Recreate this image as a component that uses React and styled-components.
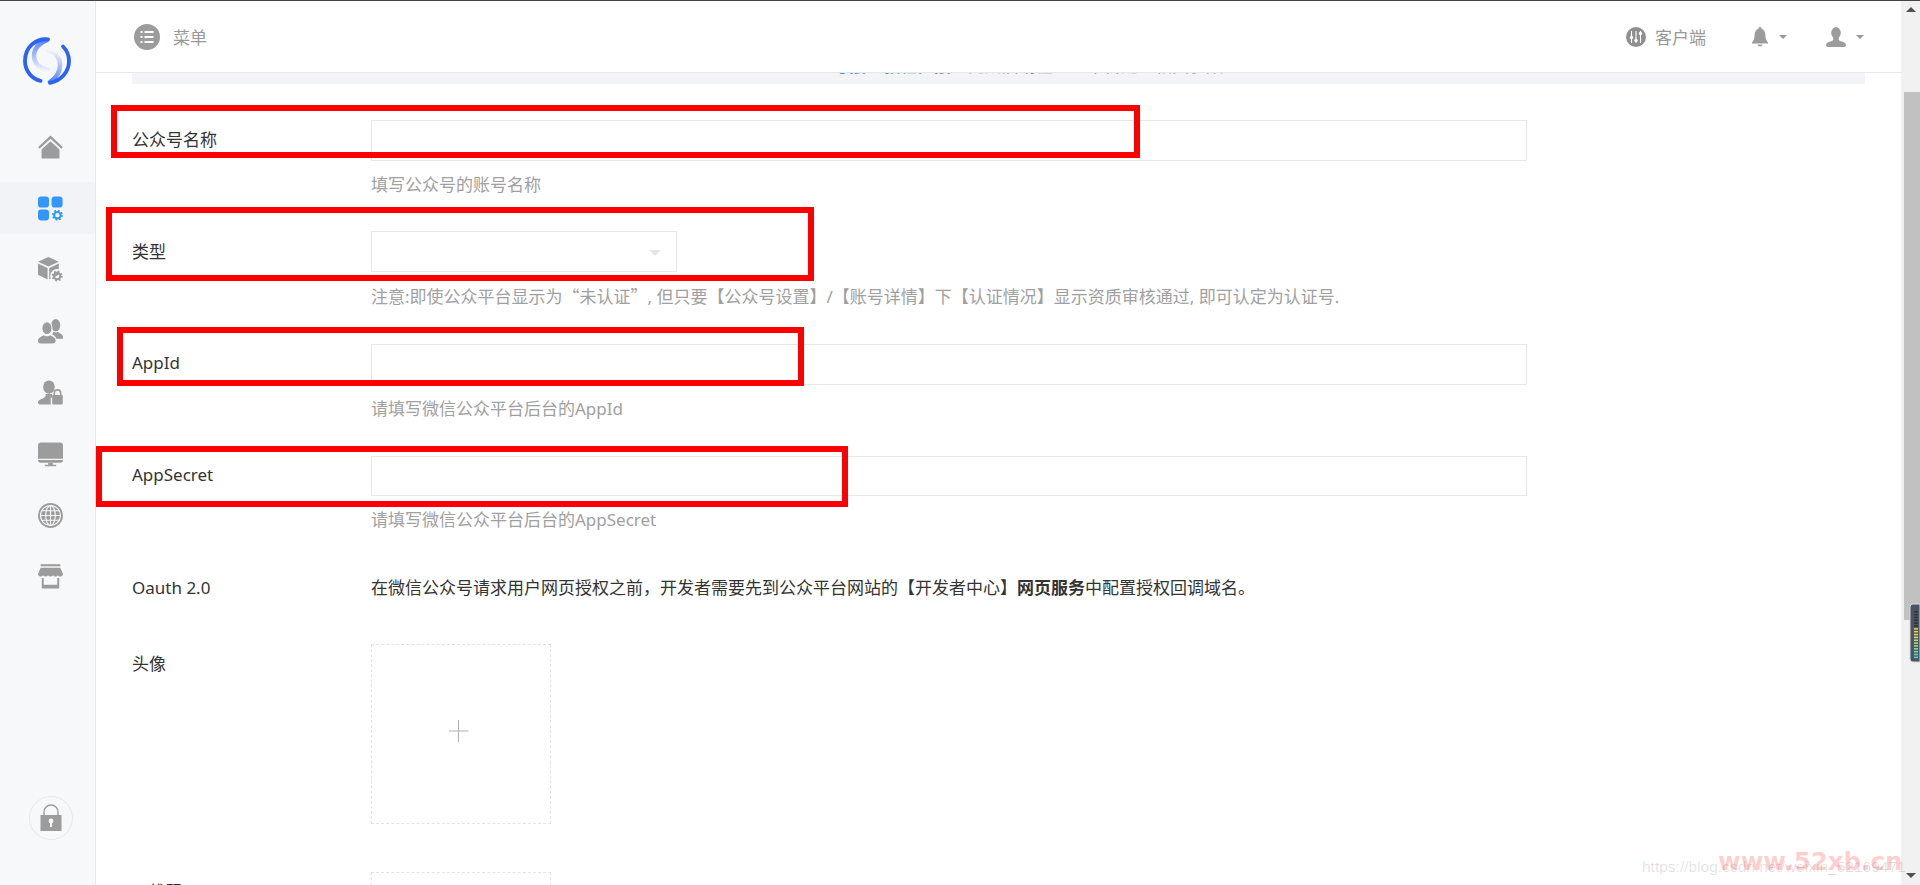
import React from "react";
import styled, { createGlobalStyle } from "styled-components";

const Global = createGlobalStyle`
  html, body { margin: 0; height: 100%; overflow: hidden; background: #fff; }
  #root { height: 100%; }
  * { box-sizing: border-box; }
  body { font-family: "Noto Sans", "Noto Sans CJK SC", sans-serif; font-size: 17px; color: #333; }
`;

const Shell = styled.div`
  position: relative;
  height: 885px;
  display: flex;
  overflow: hidden;
  border-top: 1px solid #454545;
`;
const Sidebar = styled.aside`
  width: 96px;
  flex: none;
  display: flex;
  flex-direction: column;
  background: #f7f8fa;
  border-right: 1px solid #e7e8ec;
`;
const LogoWrap = styled.div`
  height: 120px;
  padding: 36px 0 0 23px;
`;
const Nav = styled.nav`
  display: flex;
  flex-direction: column;
  gap: 9.43px;
  flex: 1;
`;
const NavItem = styled.div`
  height: 52px;
  flex: none;
  display: flex;
  align-items: center;
  justify-content: center;
  padding-left: 5px;
  color: ${(p) => (p.$active ? "#3296fa" : "#9c9c9c")};
  background: ${(p) => (p.$active ? "#f1f3f7" : "transparent")};
`;
const LockCircle = styled.div`
  width: 44px;
  height: 44px;
  flex: none;
  margin: 0 0 45px 29px;
  border: 1px solid #e7e8ec;
  border-radius: 50%;
  display: flex;
  align-items: center;
  justify-content: center;
  color: #9c9c9c;
`;
const Main = styled.div`
  flex: 1;
  min-width: 0;
  display: flex;
  flex-direction: column;
`;
const TopBar = styled.header`
  height: 72px;
  flex: none;
  display: flex;
  align-items: center;
  padding: 0 37px 0 38px;
  border-bottom: 1px solid #e7e8ec;
  color: #999;
`;
const MenuLabel = styled.span`
  margin-left: 13px;
  flex: 1;
`;
const ClientLabel = styled.span`
  margin-left: 9px;
  margin-right: 46px;
`;
const Caret = styled.span`
  width: 0;
  height: 0;
  margin-left: ${(p) => p.$gap || 11}px;
  margin-right: ${(p) => p.$after || 0}px;
  border-left: 4px solid transparent;
  border-right: 4px solid transparent;
  border-top: 4.5px solid #999;
`;
const Viewport = styled.div`
  flex: 1;
  overflow: hidden;
  padding: 0 36px;
`;
const Notice = styled.div`
  height: 11px;
  background: #f3f4f8;
  overflow: hidden;
  display: flex;
  align-items: flex-end;
  justify-content: center;
  padding: 0 0 7px 24px;
  color: #888;
  white-space: nowrap;
  margin-bottom: 35.8px;
`;
const NoticeLink = styled.span`
  color: #3296fa;
`;
const Row = styled.div`
  position: relative;
  display: grid;
  grid-template-columns: 239px 1156px;
  margin-bottom: ${(p) => p.$mb ?? 33.6}px;
`;
const Label = styled.div`
  padding-top: ${(p) => p.$pt ?? 7.4}px;
  line-height: 25.2px;
  color: #333;
`;
const TextInput = styled.div`
  height: 40.8px;
  border: 1px solid #e7e7eb;
  background: #fff;
`;
const SelectBox = styled.div`
  width: 306px;
  height: 40.8px;
  border: 1px solid #e7e7eb;
  display: flex;
  align-items: center;
  justify-content: flex-end;
  padding-right: 15px;
  &::after {
    content: "";
    border-left: 6.5px solid transparent;
    border-right: 6.5px solid transparent;
    border-top: 6.5px solid #e6e6e6;
    margin-top: 2px;
  }
`;
const Help = styled.div`
  margin-top: 11px;
  margin-bottom: 1px;
  line-height: 25.2px;
  color: #a0a0a0;
  white-space: nowrap;
`;
const Quoted = styled.span`
  font-family: "Noto Sans CJK SC", sans-serif;
`;
const Static = styled.div`
  padding-top: 7.4px;
  height: 43px;
  line-height: 25.2px;
  color: #333;
  white-space: nowrap;
`;
const Upload = styled.div`
  width: 180px;
  height: 180px;
  border: 1px dashed #e3e3e3;
  display: flex;
  align-items: center;
  justify-content: center;
  padding: 0 4px 6px 0;
  color: #b0b0b0;
`;
const Annotation = styled.div`
  position: absolute;
  left: ${(p) => p.$l}px;
  top: ${(p) => p.$t}px;
  width: ${(p) => p.$w}px;
  height: ${(p) => p.$h}px;
  border: 6px solid #ff0000;
  pointer-events: none;
`;
const Rail = styled.div`
  width: 19px;
  flex: none;
  background: #f1f1f1;
  display: flex;
  flex-direction: column;
  align-items: flex-end;
`;
const RailArrow = styled.div`
  width: 19px;
  height: ${(p) => p.$h}px;
  flex: none;
  display: flex;
  justify-content: center;
  padding-top: ${(p) => p.$pt}px;
  &::after {
    content: "";
    height: 0;
    border-left: 5px solid transparent;
    border-right: 5px solid transparent;
    ${(p) => (p.$down ? "border-top: 5px solid #505050;" : "border-bottom: 5px solid #505050;")}
  }
`;
const RailThumb = styled.div`
  width: 16px;
  height: 528px;
  margin: 73px 0 0;
  background: #c1c1c1;
`;
const RailGap = styled.div`
  flex: 1;
`;
const Meter = styled.svg`
  position: absolute;
  right: 0;
  top: 602px;
`;
const Stamp = styled.div`
  position: absolute;
  left: 1718px;
  top: 843px;
  font-family: "DejaVu Sans", sans-serif;
  font-weight: 700;
  font-size: 24.5px;
  line-height: 36px;
  color: rgba(255, 0, 0, 0.2);
  white-space: nowrap;
`;
const BlogMark = styled.div`
  position: absolute;
  left: 1642px;
  top: 856px;
  font-family: "Liberation Sans", sans-serif;
  font-size: 15.5px;
  line-height: 20px;
  color: rgba(0, 0, 0, 0.13);
  white-space: nowrap;
`;

const Logo = () => (
  <svg width="48" height="48" viewBox="0 0 48 48" fill="none">
    <defs>
      <linearGradient id="lgB" x1="32" y1="14" x2="26" y2="44" gradientUnits="userSpaceOnUse">
        <stop offset="0" stopColor="#2a63f5" stopOpacity="0.02" />
        <stop offset="1" stopColor="#2a63f5" stopOpacity="0.8" />
      </linearGradient>
      <linearGradient id="lgC" x1="20" y1="34" x2="22" y2="3" gradientUnits="userSpaceOnUse">
        <stop offset="0" stopColor="#2a63f5" stopOpacity="0.02" />
        <stop offset="1" stopColor="#2a63f5" stopOpacity="0.8" />
      </linearGradient>
    </defs>
    <path d="M25 2.400C13 1 2 10 2 24c0 10 7 18 15.500 19.800" stroke="#2a63f5" strokeWidth="3.800" strokeLinecap="round" />
    <path d="M27 45.800C38 44 46 35 46 24c0-6-2.500-11-6-14.500" stroke="#2a63f5" strokeWidth="3.800" strokeLinecap="round" />
    <path d="M24 3c-8 2.500-13 9-13 15.500 0 8 6 13.500 14 14.500" stroke="url(#lgC)" strokeWidth="4.500" strokeLinecap="round" />
    <path d="M27 45c6-4 10-10 10-17 0-7-4-12-11-14.500" stroke="url(#lgB)" strokeWidth="4.500" strokeLinecap="round" />
  </svg>
);

const Gear = ({ x, y, c = "currentColor" }) => (
  <g fill="none" stroke={c}>
    <circle cx={x} cy={y} r="5.400" stroke="#f7f8fa" strokeWidth="2.600" />
    <circle cx={x} cy={y} r="3.100" strokeWidth="2" />
    <circle cx={x} cy={y} r="4.500" strokeWidth="1.600" strokeDasharray="1.700 1.830" />
  </g>
);

const Svg = ({ children, size = 25 }) => (
  <svg width={size} height={size} viewBox="0 0 24 24" fill="currentColor">{children}</svg>
);

const HomeIcon = () => (
  <Svg>
    <path d="M12 .5.2 11.600l1.400 1.600L12 3.600l10.400 9.600 1.400-1.600z" />
    <path d="M12 6 3.400 13.900V22.600h17.200v-8.700z" />
  </Svg>
);
const AppsIcon = () => (
  <Svg>
    <rect x="0" y="0.500" width="10.600" height="10.600" rx="3" />
    <rect x="13" y="0.500" width="10.600" height="10.600" rx="3" />
    <rect x="0" y="12.900" width="10.600" height="10.600" rx="3" />
    <Gear x={18.6} y={18.4} />
  </Svg>
);
const CubeIcon = () => (
  <Svg>
    <path d="M10 0 20 4.600 10 9.200 0 4.600z" />
    <path d="M0 6.200 9.200 10.500V21.500L0 17z" />
    <path d="M10.800 10.500 20 6.200V17l-9.200 4.500z" />
    <Gear x={18.4} y={18.2} />
  </Svg>
);
const UsersIcon = () => (
  <Svg>
    <ellipse cx="17" cy="6" rx="4.300" ry="6" />
    <path d="M15 12c1 1.400 3.200 1.400 4.200 0 .4 1.600 4.800 2.400 4.800 5v2h-6.400c-.6-2.200-2.400-3.400-4-4.400z" />
    <ellipse cx="8.600" cy="8.800" rx="4.900" ry="6.200" stroke="#f7f8fa" strokeWidth="1" />
    <path d="M5.600 15.500c1.400 1.400 4.600 1.400 6 0 2.400 1.200 5.400 2.600 5.400 5.200 0 2-1.600 2.800-3 2.800H2.600c-1.400 0-2.600-.8-2.600-2.600 0-2.800 2.800-4 5.600-5.400z" />
  </Svg>
);
const UserLockIcon = () => (
  <Svg>
    <ellipse cx="10.500" cy="6.800" rx="5.600" ry="6.400" />
    <path d="M7.500 13.500h6v3.400h-1.300v6.600H2c-1.500 0-2-.8-2-1.800 0-2.200 2.600-3.200 5-4.200 1.400-.6 2.500-1.600 2.500-4z" />
    <rect x="13.600" y="14.400" width="10.200" height="9" rx="1" />
    <path d="M15.600 14.600v-2a3.100 3.100 0 0 1 6.200 0v2" fill="none" stroke="currentColor" strokeWidth="1.500" />
  </Svg>
);
const MonitorIcon = () => (
  <Svg>
    <path d="M3 .5h18a3 3 0 0 1 3 3v12.600H0V3.500a3 3 0 0 1 3-3z" />
    <path d="M0 17.300h24V18a2.600 2.600 0 0 1-2.600 2H2.600A2.600 2.600 0 0 1 0 18z" />
    <path d="M9.800 20h4.400v1.800h3.200v1.500H6.600v-1.500h3.200z" />
  </Svg>
);
const GlobeIcon = () => (
  <Svg>
    <circle cx="12" cy="12" r="12" />
    <circle cx="12" cy="12" r="9.600" fill="none" stroke="#f7f8fa" strokeWidth="1.100" />
    <ellipse cx="12" cy="12" rx="4.600" ry="9.600" fill="none" stroke="#f7f8fa" strokeWidth="1.100" />
    <path d="M12 2.400v19.200M2.400 12h19.200M3.600 7.400h16.800M3.600 16.600h16.800" stroke="#f7f8fa" strokeWidth="1.100" />
  </Svg>
);
const StoreIcon = () => (
  <Svg>
    <rect x="2.600" y="0.200" width="18.800" height="2" />
    <path d="M2.600 3.600h18.800L24 9.600c0 1.400-1.100 2.400-2.400 2.400-1.200 0-2-.6-2.400-1.300-.5.8-1.400 1.300-2.400 1.300s-1.900-.5-2.400-1.300c-.5.8-1.400 1.300-2.400 1.300s-1.900-.5-2.400-1.300c-.5.8-1.400 1.300-2.400 1.300s-1.900-.5-2.400-1.300c-.4.700-1.200 1.300-2.400 1.300C1.100 12 0 11 0 9.600z" />
    <path d="M3.600 13.400v9.200c0 .6.400 1 1 1h14.800c.6 0 1-.4 1-1v-9.200h-1.900v6.400H5.500v-6.400z" />
  </Svg>
);
const LockIcon = () => (
  <svg width="22" height="28" viewBox="0 0 22 28" fill="currentColor">
    <path d="M4 11V8a7 7 0 0 1 14 0v3" fill="none" stroke="currentColor" strokeWidth="1.400" />
    <rect x="0.500" y="11" width="21" height="16" />
    <circle cx="11" cy="17" r="2.400" fill="#f7f8fa" />
    <rect x="10" y="17" width="2" height="6" fill="#f7f8fa" />
  </svg>
);
const MenuIcon = () => (
  <svg width="26" height="26" viewBox="0 0 26 26">
    <circle cx="13" cy="13" r="13" fill="#9c9c9c" />
    <path d="M6.500 8h2M10.500 8h9M6.500 13h2M10.500 13h9M6.500 18h2M10.500 18h9" stroke="#fff" strokeWidth="1.900" />
  </svg>
);
const SlidersIcon = () => (
  <svg width="20" height="20" viewBox="0 0 20 20">
    <circle cx="10" cy="10" r="10" fill="#8f8f8f" />
    <path d="M5.500 4v12M10 4v12M14.500 4v12" stroke="#fff" strokeWidth="1.100" />
    <circle cx="5.500" cy="10.500" r="1.700" fill="#fff" />
    <circle cx="10" cy="13.500" r="1.700" fill="#fff" />
    <circle cx="14.500" cy="6.500" r="1.700" fill="#fff" />
  </svg>
);
const BellIcon = () => (
  <svg width="16" height="20" viewBox="0 0 16 20" fill="#9c9c9c">
    <path d="M8 0a1.400 1.400 0 0 1 1.400 1.600C12 2.400 13.400 5 13.400 8c0 4 1 5.600 2.600 7.400V16.400H0v-1C1.600 13.600 2.600 12 2.600 8 2.600 5 4 2.400 6.600 1.600A1.400 1.400 0 0 1 8 0z" />
    <path d="M5.600 17.600h4.800A2.500 2.500 0 0 1 8 19.600a2.500 2.500 0 0 1-2.400-2z" />
  </svg>
);
const PersonIcon = () => (
  <svg width="20" height="20" viewBox="0 0 20 20" fill="#9c9c9c">
    <ellipse cx="10" cy="5.800" rx="4.800" ry="5.800" />
    <path d="M7.200 10.600h5.600v1.800c0 1 1.400 1.600 3 2.200 2 .7 4.200 1.500 4.200 3.400 0 1.300-1 2-2 2H2c-1 0-2-.7-2-2 0-1.900 2.200-2.700 4.200-3.400 1.600-.6 3-1.200 3-2.200z" />
  </svg>
);
const PlusIcon = () => (
  <svg width="20" height="22" viewBox="0 0 20 22" stroke="currentColor" strokeWidth="1">
    <path d="M0 11h19.500M9.500 0v22" />
  </svg>
);

const meterBars = [
  "#30343d", "#30343d", "#30343d", "#30343d", "#30343d", "#30343d",
  "#f5d33a", "#f3d83e", "#ece048", "#dde558", "#c8e866", "#b2e874", "#98e884", "#80e896", "#66e8a8", "#50e8b8", "#3ee8c6",
];
const LevelMeter = () => (
  <Meter width="11" height="60" viewBox="0 0 11 60">
    <path d="M11 1H4a3 3 0 0 0-3 3v52a3 3 0 0 0 3 3h7z" fill="#4c5463" stroke="#d5d7dc" strokeWidth="1" />
    {meterBars.map((c, i) => (
      <rect key={i} x="5" y={8 + i * 2.85} width="4" height="1.500" fill={c} />
    ))}
  </Meter>
);

const fields = [
  {
    label: "公众号名称",
    control: <TextInput />,
    help: "填写公众号的账号名称",
    box: { l: -21, t: -15, w: 1029, h: 53 },
  },
  {
    label: "类型",
    control: <SelectBox />,
    help: (
      <>
        注意:即使公众平台显示为<Quoted>“未认证”</Quoted>, 但只要【公众号设置】/【账号详情】下【认证情况】显示资质审核通过, 即可认定为认证号.
      </>
    ),
    box: { l: -26, t: -24, w: 708, h: 74 },
  },
  {
    label: "AppId",
    pt: 6.4,
    control: <TextInput />,
    help: "请填写微信公众平台后台的AppId",
    box: { l: -15, t: -17, w: 687, h: 59 },
  },
  {
    label: "AppSecret",
    pt: 6.4,
    control: <TextInput />,
    help: "请填写微信公众平台后台的AppSecret",
    box: { l: -36, t: -10, w: 752, h: 61 },
  },
];

const navIcons = [HomeIcon, AppsIcon, CubeIcon, UsersIcon, UserLockIcon, MonitorIcon, GlobeIcon, StoreIcon];

export default function App() {
  return (
    <>
      <Global />
      <Shell>
        <Sidebar>
          <LogoWrap><Logo /></LogoWrap>
          <Nav>
            {navIcons.map((Icon, i) => (
              <NavItem key={i} $active={i === 1}><Icon /></NavItem>
            ))}
          </Nav>
          <LockCircle><LockIcon /></LockCircle>
        </Sidebar>
        <Main>
          <TopBar>
            <MenuIcon />
            <MenuLabel>菜单</MenuLabel>
            <SlidersIcon />
            <ClientLabel>客户端</ClientLabel>
            <BellIcon />
            <Caret $after={39} />
            <PersonIcon />
            <Caret $gap={10} />
          </TopBar>
          <Viewport>
            <Notice>
              <NoticeLink>公众号接入教程</NoticeLink>，接入完成后请在公众平台配置相关参数
            </Notice>
            {fields.map((f) => (
              <Row key={f.label}>
                <Label $pt={f.pt}>{f.label}</Label>
                <div>
                  {f.control}
                  <Help>{f.help}</Help>
                </div>
                <Annotation $l={f.box.l} $t={f.box.t} $w={f.box.w} $h={f.box.h} />
              </Row>
            ))}
            <Row>
              <Label>Oauth 2.0</Label>
              <Static>
                在微信公众号请求用户网页授权之前，开发者需要先到公众平台网站的【开发者中心】<b>网页服务</b>中配置授权回调域名。
              </Static>
            </Row>
            <Row $mb={48}>
              <Label $pt={7}>头像</Label>
              <Upload><PlusIcon /></Upload>
            </Row>
            <Row>
              <Label $pt={7}>二维码</Label>
              <Upload><PlusIcon /></Upload>
            </Row>
          </Viewport>
        </Main>
        <Rail>
          <RailArrow $h={18} $pt={6} />
          <RailThumb />
          <RailGap />
          <RailArrow $h={18} $pt={6} $down />
        </Rail>
        <LevelMeter />
        <BlogMark>https://blog.csdn.net/weixin_52169471</BlogMark>
        <Stamp>www.52xb.cn</Stamp>
      </Shell>
    </>
  );
}
